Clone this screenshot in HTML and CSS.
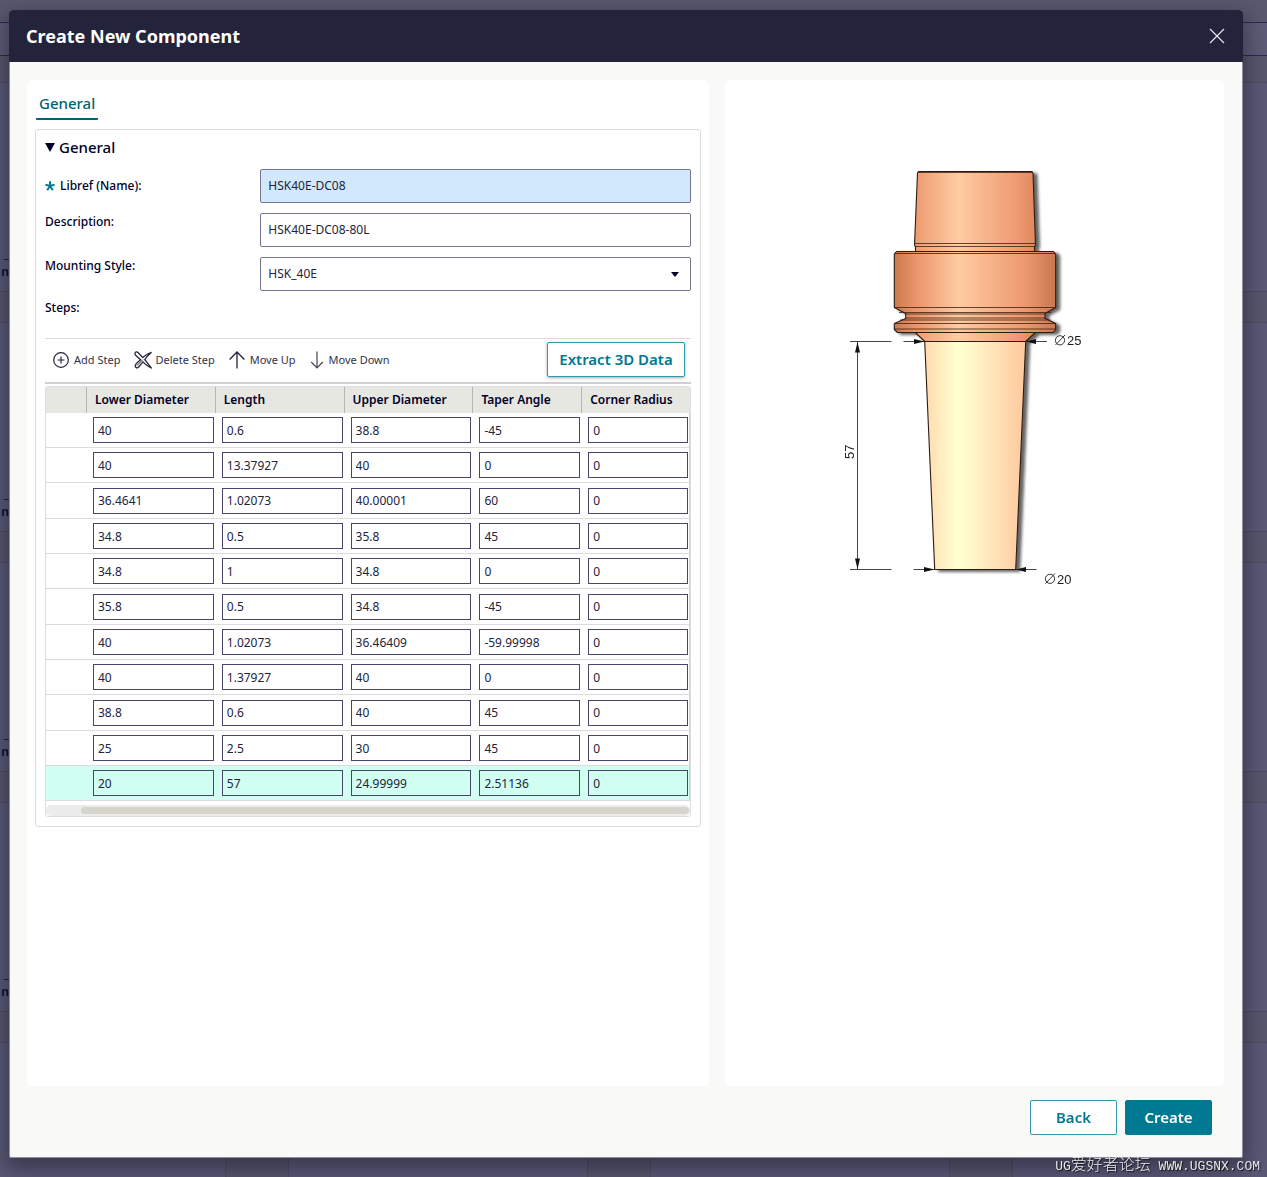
FILE: index.html
```html
<!DOCTYPE html>
<html lang="en">
<head>
<meta charset="utf-8">
<title>Create New Component</title>
<link rel="stylesheet" href="styles.css">
</head>
<body>
<div class="backdrop" aria-hidden="true">
  <div class="bar bar-top"></div>
  <div class="bar bar-search"></div>
  <div class="bar bar-filter"></div>
  <div class="tile"><span class="tile-text">_</span><span class="tile-text">n</span></div>
  <div class="strip"></div>
  <div class="tile"><span class="tile-text">_</span><span class="tile-text">n</span></div>
  <div class="strip"></div>
  <div class="tile"><span class="tile-text">_</span><span class="tile-text">n</span></div>
  <div class="strip"></div>
  <div class="tile"><span class="tile-text">_</span><span class="tile-text">n</span></div>
  <div class="strip"></div>
  <div class="tile tile-columns"></div>
</div>

<main class="dialog" role="dialog" aria-labelledby="dialog-title">
  <header class="dialog-header">
    <h1 id="dialog-title">Create New Component</h1>
    <button class="close" type="button" aria-label="Close">
      <svg width="16" height="16" viewBox="0 0 16 16"><path d="M1 1L15 15M15 1L1 15" fill="none" stroke="#e4e4ec" stroke-width="1.2"/></svg>
    </button>
  </header>

  <div class="dialog-body">
    <section class="panel panel-form">
      <nav class="tabs"><a class="tab" href="#general">General</a></nav>
      <div class="group" id="general">
        <h2><button class="group-toggle" type="button" aria-expanded="true">
          <svg width="10" height="9" viewBox="0 0 10 9"><path d="M0 0H10L5 9Z" fill="#000028"/></svg>General</button></h2>

        <form class="fields">
          <label class="required" for="libref"><svg width="10" height="10" viewBox="0 0 10 10"><path d="M5 5V0.300M5 5L9.600 3.600M5 5L7.800 9.200M5 5L2.200 9.200M5 5L0.400 3.600" fill="none" stroke="#007993" stroke-width="2"/></svg>Libref (Name):</label>
          <input class="field field-active" id="libref" type="text" value="HSK40E-DC08">
          <label for="description">Description:</label>
          <input class="field" id="description" type="text" value="HSK40E-DC08-80L">
          <label for="mounting">Mounting Style:</label>
          <div class="select-wrap">
            <select class="field" id="mounting"><option>HSK_40E</option></select>
            <svg class="caret" width="8" height="5" viewBox="0 0 8 5"><path d="M0 0H8L4 5Z" fill="#000028"/></svg>
          </div>
        </form>
        <h3 id="steps-title">Steps:</h3>

        <div class="toolbar">
          <button class="tool" type="button"><svg width="16" height="16" viewBox="0 0 16 16"><path d="M8 0.700A7.300 7.300 0 1 1 8 15.300A7.300 7.300 0 1 1 8 0.700M8 4.500V11.500M4.500 8H11.500" fill="none" stroke="#23233c" stroke-width="1.200"/></svg>Add Step</button>
          <button class="tool tool-delete" type="button"><svg width="18" height="18" viewBox="0 0 18 18"><path d="M1 2.600C1 .6 3 .5 4.200 1.700L8.600 6.400C11 4.500 13.500 2.300 17.500 1.300C15 3.500 12.500 5.800 10.800 8.600L17.300 16.800C14.500 16 11.500 13.500 8.900 10.900L4.600 16C3.200 17.600 .7 16.500 1.300 14.300C2 12 4.800 10.400 6.600 8.800L1.900 4.600C1.300 4 1 3.400 1 2.600Z" fill="none" stroke="#23233c" stroke-width="1.300"/><path d="M3 14.500L8.700 8.700" stroke="#23233c"/></svg>Delete Step</button>
          <button class="tool" type="button"><svg width="16" height="18" viewBox="0 0 16 18"><path d="M8 17.500V1M0.600 8.500L8 1L15.400 8.500" fill="none" stroke="#23233c" stroke-width="1.300"/></svg>Move Up</button>
          <button class="tool" type="button"><svg width="14" height="18" viewBox="0 0 14 18"><path d="M7 0.500V17M1.200 11L7 17L12.800 11" fill="none" stroke="#444450" stroke-width="1.200"/></svg>Move Down</button>
          <button class="btn btn-extract" type="button">Extract 3D Data</button>
        </div>

        <div class="grid">
          <table aria-labelledby="steps-title">
            <colgroup><col class="c-mark"><col class="c-wide"><col class="c-wide"><col class="c-wide"><col><col></colgroup>
            <thead><tr><td></td><th scope="col">Lower Diameter</th><th scope="col">Length</th><th scope="col">Upper Diameter</th><th scope="col">Taper Angle</th><th scope="col">Corner Radius</th></tr></thead>
            <tbody>
              <tr><td></td><td><input aria-label="Lower Diameter, step 1" value="40"></td><td><input aria-label="Length, step 1" value="0.6"></td><td><input aria-label="Upper Diameter, step 1" value="38.8"></td><td><input aria-label="Taper Angle, step 1" value="-45"></td><td><input aria-label="Corner Radius, step 1" value="0"></td></tr>
              <tr><td></td><td><input aria-label="Lower Diameter, step 2" value="40"></td><td><input aria-label="Length, step 2" value="13.37927"></td><td><input aria-label="Upper Diameter, step 2" value="40"></td><td><input aria-label="Taper Angle, step 2" value="0"></td><td><input aria-label="Corner Radius, step 2" value="0"></td></tr>
              <tr><td></td><td><input aria-label="Lower Diameter, step 3" value="36.4641"></td><td><input aria-label="Length, step 3" value="1.02073"></td><td><input aria-label="Upper Diameter, step 3" value="40.00001"></td><td><input aria-label="Taper Angle, step 3" value="60"></td><td><input aria-label="Corner Radius, step 3" value="0"></td></tr>
              <tr><td></td><td><input aria-label="Lower Diameter, step 4" value="34.8"></td><td><input aria-label="Length, step 4" value="0.5"></td><td><input aria-label="Upper Diameter, step 4" value="35.8"></td><td><input aria-label="Taper Angle, step 4" value="45"></td><td><input aria-label="Corner Radius, step 4" value="0"></td></tr>
              <tr><td></td><td><input aria-label="Lower Diameter, step 5" value="34.8"></td><td><input aria-label="Length, step 5" value="1"></td><td><input aria-label="Upper Diameter, step 5" value="34.8"></td><td><input aria-label="Taper Angle, step 5" value="0"></td><td><input aria-label="Corner Radius, step 5" value="0"></td></tr>
              <tr><td></td><td><input aria-label="Lower Diameter, step 6" value="35.8"></td><td><input aria-label="Length, step 6" value="0.5"></td><td><input aria-label="Upper Diameter, step 6" value="34.8"></td><td><input aria-label="Taper Angle, step 6" value="-45"></td><td><input aria-label="Corner Radius, step 6" value="0"></td></tr>
              <tr><td></td><td><input aria-label="Lower Diameter, step 7" value="40"></td><td><input aria-label="Length, step 7" value="1.02073"></td><td><input aria-label="Upper Diameter, step 7" value="36.46409"></td><td><input aria-label="Taper Angle, step 7" value="-59.99998"></td><td><input aria-label="Corner Radius, step 7" value="0"></td></tr>
              <tr><td></td><td><input aria-label="Lower Diameter, step 8" value="40"></td><td><input aria-label="Length, step 8" value="1.37927"></td><td><input aria-label="Upper Diameter, step 8" value="40"></td><td><input aria-label="Taper Angle, step 8" value="0"></td><td><input aria-label="Corner Radius, step 8" value="0"></td></tr>
              <tr><td></td><td><input aria-label="Lower Diameter, step 9" value="38.8"></td><td><input aria-label="Length, step 9" value="0.6"></td><td><input aria-label="Upper Diameter, step 9" value="40"></td><td><input aria-label="Taper Angle, step 9" value="45"></td><td><input aria-label="Corner Radius, step 9" value="0"></td></tr>
              <tr><td></td><td><input aria-label="Lower Diameter, step 10" value="25"></td><td><input aria-label="Length, step 10" value="2.5"></td><td><input aria-label="Upper Diameter, step 10" value="30"></td><td><input aria-label="Taper Angle, step 10" value="45"></td><td><input aria-label="Corner Radius, step 10" value="0"></td></tr>
              <tr class="selected"><td></td><td><input aria-label="Lower Diameter, step 11" value="20"></td><td><input aria-label="Length, step 11" value="57"></td><td><input aria-label="Upper Diameter, step 11" value="24.99999"></td><td><input aria-label="Taper Angle, step 11" value="2.51136"></td><td><input aria-label="Corner Radius, step 11" value="0"></td></tr>
            </tbody>
          </table>
          <div class="scrollbar"><div class="thumb"></div></div>
        </div>
      </div>
    </section>

    <section class="panel panel-preview" aria-label="Preview">
      <svg width="271" height="440" viewBox="839 160 271 440">
        <defs>
          <linearGradient id="steel" gradientUnits="userSpaceOnUse" x1="894" y1="0" x2="1056" y2="0">
            <stop offset="0" stop-color="#cb784f"/><stop offset=".14" stop-color="#eb966b"/><stop offset=".4" stop-color="#ffcba2"/><stop offset=".8" stop-color="#ee9a70"/><stop offset="1" stop-color="#c8774f"/>
          </linearGradient>
          <linearGradient id="head" gradientUnits="userSpaceOnUse" x1="915" y1="0" x2="1036" y2="0">
            <stop offset="0" stop-color="#ee9b70"/><stop offset=".36" stop-color="#ffcba2"/><stop offset=".85" stop-color="#ee9a70"/><stop offset="1" stop-color="#df875c"/>
          </linearGradient>
          <linearGradient id="cutter" gradientUnits="userSpaceOnUse" x1="924" y1="0" x2="1026" y2="0">
            <stop offset="0" stop-color="#ffd9ae"/><stop offset=".32" stop-color="#ffffd0"/><stop offset=".42" stop-color="#fffbcc"/><stop offset="1" stop-color="#ffc79d"/>
          </linearGradient>
          <filter id="shade" x="-10%" y="-10%" width="130%" height="120%"><feDropShadow dx="4" dy="2" stdDeviation="1.500" flood-color="#000" flood-opacity=".6"/></filter>
        </defs>
        <g filter="url(#shade)" stroke="#2a1c14" stroke-width="1.100" stroke-linejoin="round">
          <path d="M924.700 341.500H1025.700L1015.700 569.500H934.700Z" fill="url(#cutter)"/>
          <path d="M915.300 332.500H1035.300L1025.700 341.500H924.700Z" fill="url(#head)"/>
          <path d="M918.500 171.500H1032L1033 173L1035.500 245L1034.500 247V251.500H915.500V247L914.500 245L917.500 173Z" fill="url(#head)"/>
          <path d="M896.500 251.500H1053.500L1055.700 254V307.500L1045 313.500V318.500L1055.700 323.500V329.500L1053 332.500H897.500L894.300 329.500V323.500L905.700 318.500V313.500L894.300 307.500V254Z" fill="url(#steel)"/>
        </g>
        <path d="M918 172.500H1032M915 243.500H1035M915 246.500H1035M895 253.500H1055M895 307.500H1055M899 312.500H1051M906 314H1045M906 318H1045M900 320H1050M895 323.500H1055M895 329H1055" fill="none" stroke="#3e2113" stroke-opacity=".8"/>
        <path d="M850 341.500H891.500M850 569.500H891.500M857.500 342V569M903.500 341.500H924M1026 341.500H1047M913.500 569.500H934M1016 569.500H1036.500" fill="none" stroke="#444"/>
        <path d="M857.500 342L855 352.500H860ZM857.500 569L855 558.500H860ZM924.500 341.500L914 339V344ZM1026 341.500L1036 339V344ZM934.500 569.500L924 567V572ZM1016 569.500L1026 567V572Z" fill="#111"/>
        <g class="dimension">
          <text x="1067" y="345">25</text><text x="1057" y="584">20</text>
          <text transform="translate(854 459) rotate(-90)">57</text>
        </g>
        <path d="M1060 335.700A4.600 4.600 0 1 1 1060 344.900A4.600 4.600 0 1 1 1060 335.700M1055.500 345L1065 335M1050 574.200A4.600 4.600 0 1 1 1050 583.400A4.600 4.600 0 1 1 1050 574.200M1045.500 583.500L1055 573.500" fill="none" stroke="#333"/>
      </svg>
    </section>
  </div>

  <footer class="dialog-footer">
    <button class="btn" type="button">Back</button>
    <button class="btn btn-primary" type="button">Create</button>
  </footer>
</main>
<p class="watermark"><span class="watermark-latin">UG</span>爱好者论坛<span class="watermark-latin"> WWW.UGSNX.COM</span></p>
</body>
</html>
```
FILE: styles.css
```css
* { box-sizing: border-box; }

body {
  margin: 0;
  background: #5a5975;
  color: #000028;
  font: 12px/18px "Noto Sans", "Open Sans", sans-serif;
}

h1, h2, h3, p { margin: 0; }
button, input, select { font: inherit; color: inherit; margin: 0; }
button { cursor: pointer; }
svg { flex: none; display: block; }

/* Dimmed page behind the dialog */
.backdrop {
  position: fixed;
  inset: 0;
  z-index: -1;
  overflow: hidden;
  display: flex;
  flex-direction: column;
}
.bar, .strip, .tile { flex: none; }
.bar { background: #59586e; border-bottom: 1px solid #2b2a50; }
.bar-top { height: 23px; }
.bar-search { height: 33px; background: #5d5c76; }
.bar-filter { height: 27px; background: #57566c; border-color: #4d4c64; }
.strip {
  height: 32px;
  background: #57566c;
  border: solid #4d4c64;
  border-width: 1px 0;
}
.tile {
  height: 208px;
  padding-bottom: 10px;
  display: flex;
  flex-direction: column;
  justify-content: flex-end;
}
.tile-text {
  width: 9px;
  text-align: right;
  color: #14123a;
  font-weight: 700;
}
.tile-columns {
  background: repeating-linear-gradient(90deg, transparent 0 225px, #4d4c64 225px 226px, #57566c 226px 288px, #4d4c64 288px 289px, transparent 289px 362px);
}

.dialog {
  margin: 10px 24px 19px 9px;
  min-height: calc(100vh - 29px);
  display: flex;
  flex-direction: column;
  border: 1px solid #8d8ca0;
  border-top: 0;
  border-radius: 4px 4px 2px 2px;
  background: #f9f9f7;
  box-shadow: 0 8px 20px 4px rgba(0, 0, 20, .35);
}
.dialog-header {
  height: 52px;
  margin: 0 -1px;
  padding: 0 18px 0 17px;
  display: flex;
  align-items: center;
  justify-content: space-between;
  border-radius: 4px 4px 0 0;
  background: #23233c;
  color: #fff;
}
h1 { font-size: 18px; line-height: 24px; font-weight: 700; }
.close { padding: 0; border: 0; background: none; }

.dialog-body {
  flex: 1;
  padding: 18px 18px 0 17px;
  display: grid;
  grid-template-columns: 682fr 499fr;
  gap: 16px;
}
.panel { border-radius: 5px; background: #fff; min-width: 0; }
.panel-form { padding: 8px; }
.panel-preview { padding-top: 80px; }
.panel-preview svg { margin: 0 auto; }
.dimension text { font: 13px "Liberation Sans", Arial, sans-serif; fill: #222; }

.tabs { display: flex; margin: 0 1px 9px; }
.tab {
  height: 32px;
  padding: 3px 3px 0;
  border-bottom: 2px solid #00646e;
  border-radius: 1px;
  color: #00646e;
  font-size: 15px;
  line-height: 24px;
  font-weight: 500;
  text-decoration: none;
}
.group { padding: 3px 9px 9px; border: 1px solid #dcdcdc; border-radius: 3px; }
.group-toggle {
  padding: 0;
  border: 0;
  background: none;
  display: flex;
  align-items: center;
  gap: 4px;
  height: 28px;
  font-size: 15px;
  font-weight: 500;
}

.fields {
  margin-top: 8px;
  display: grid;
  grid-template-columns: 1fr 2fr;
  row-gap: 10px;
  align-items: start;
}
.fields label, h3 { font-size: 12px; line-height: 18px; font-weight: 500; }
.fields .required { align-self: center; display: flex; align-items: center; gap: 5px; }
.field {
  width: 100%;
  height: 34px;
  padding: 0 7px 1px;
  border: 1px solid #76758f;
  border-radius: 2px;
  background: #fff;
  color: #23233c;
  appearance: none;
}
.field-active { background: #d1e8fd; }
.select-wrap { display: grid; align-items: center; }
.select-wrap > * { grid-area: 1 / 1; }
.caret { justify-self: end; margin-right: 12px; pointer-events: none; }
h3 { padding: 8px 0 21px; }

.toolbar {
  height: 46px;
  padding: 0 6px 2px 8px;
  display: flex;
  align-items: center;
  gap: 14px;
  border-top: 1px solid #dcdcdc;
  border-bottom: 2px solid #cfcfd2;
}
.tool {
  padding: 0;
  border: 0;
  background: none;
  display: flex;
  align-items: center;
  gap: 5px;
  font-size: 11px;
  color: #32324a;
}
.tool-delete { gap: 3px; }

.btn {
  width: 87px;
  height: 35px;
  padding: 0 0 1px;
  border: 1px solid #3298ab;
  border-radius: 2px;
  background: #fff;
  color: #007993;
  font-size: 15px;
  font-weight: 600;
}
.btn-extract { width: 138px; margin-left: auto; box-shadow: 0 1px 3px rgba(0, 0, 40, .35); }
.btn-primary { background: #007993; border-color: #007993; color: #fff; }

.grid {
  margin-top: 2px;
  border: 1px solid #dedede;
  border-radius: 3px;
}
table { width: 100%; table-layout: fixed; border-collapse: separate; border-spacing: 0; }
.c-mark { width: 40px; }
.c-wide { width: 20%; }
th, td { padding: 0; }
thead tr { height: 26px; background: #e6e7e1; }
th {
  padding-left: 8px;
  border-left: 1px solid #b5b5ba;
  font-size: 12px;
  line-height: 18px;
  font-weight: 600;
  text-align: left;
  white-space: nowrap;
}
tbody tr { height: 35px; }
tbody tr:nth-child(3n) { height: 36px; }
tbody td { padding: 0 1px 0 7px; border-bottom: 1px solid #dcdce0; vertical-align: middle; }
tbody td:last-child { border-right: 1px solid #d0d0da; }
tbody input {
  display: block;
  width: 100%;
  height: 26px;
  padding: 0 4px;
  border: 1px solid #47466a;
  border-radius: 0;
  background: transparent;
  color: #23233c;
}
.selected { background: #d1fff2; }

.scrollbar { height: 11px; margin: 4px 0 0; padding: 2px 1px 2px 35px; border-radius: 5px; background: #ececec; }
.thumb { height: 7px; border-radius: 4px; background: #d5d5cc; }

.dialog-footer {
  padding: 14px 30px 22px;
  display: flex;
  justify-content: flex-end;
  gap: 8px;
}

.watermark {
  position: fixed;
  right: 7px;
  bottom: 0;
  color: #e8e8ee;
  font: 16px/20px "Noto Sans CJK SC", sans-serif;
  font-weight: 300;
  text-shadow: 1px 1px 1px #111;
  white-space: pre;
}
.watermark-latin { font-family: "Liberation Mono", monospace; font-size: 13px; }
```
